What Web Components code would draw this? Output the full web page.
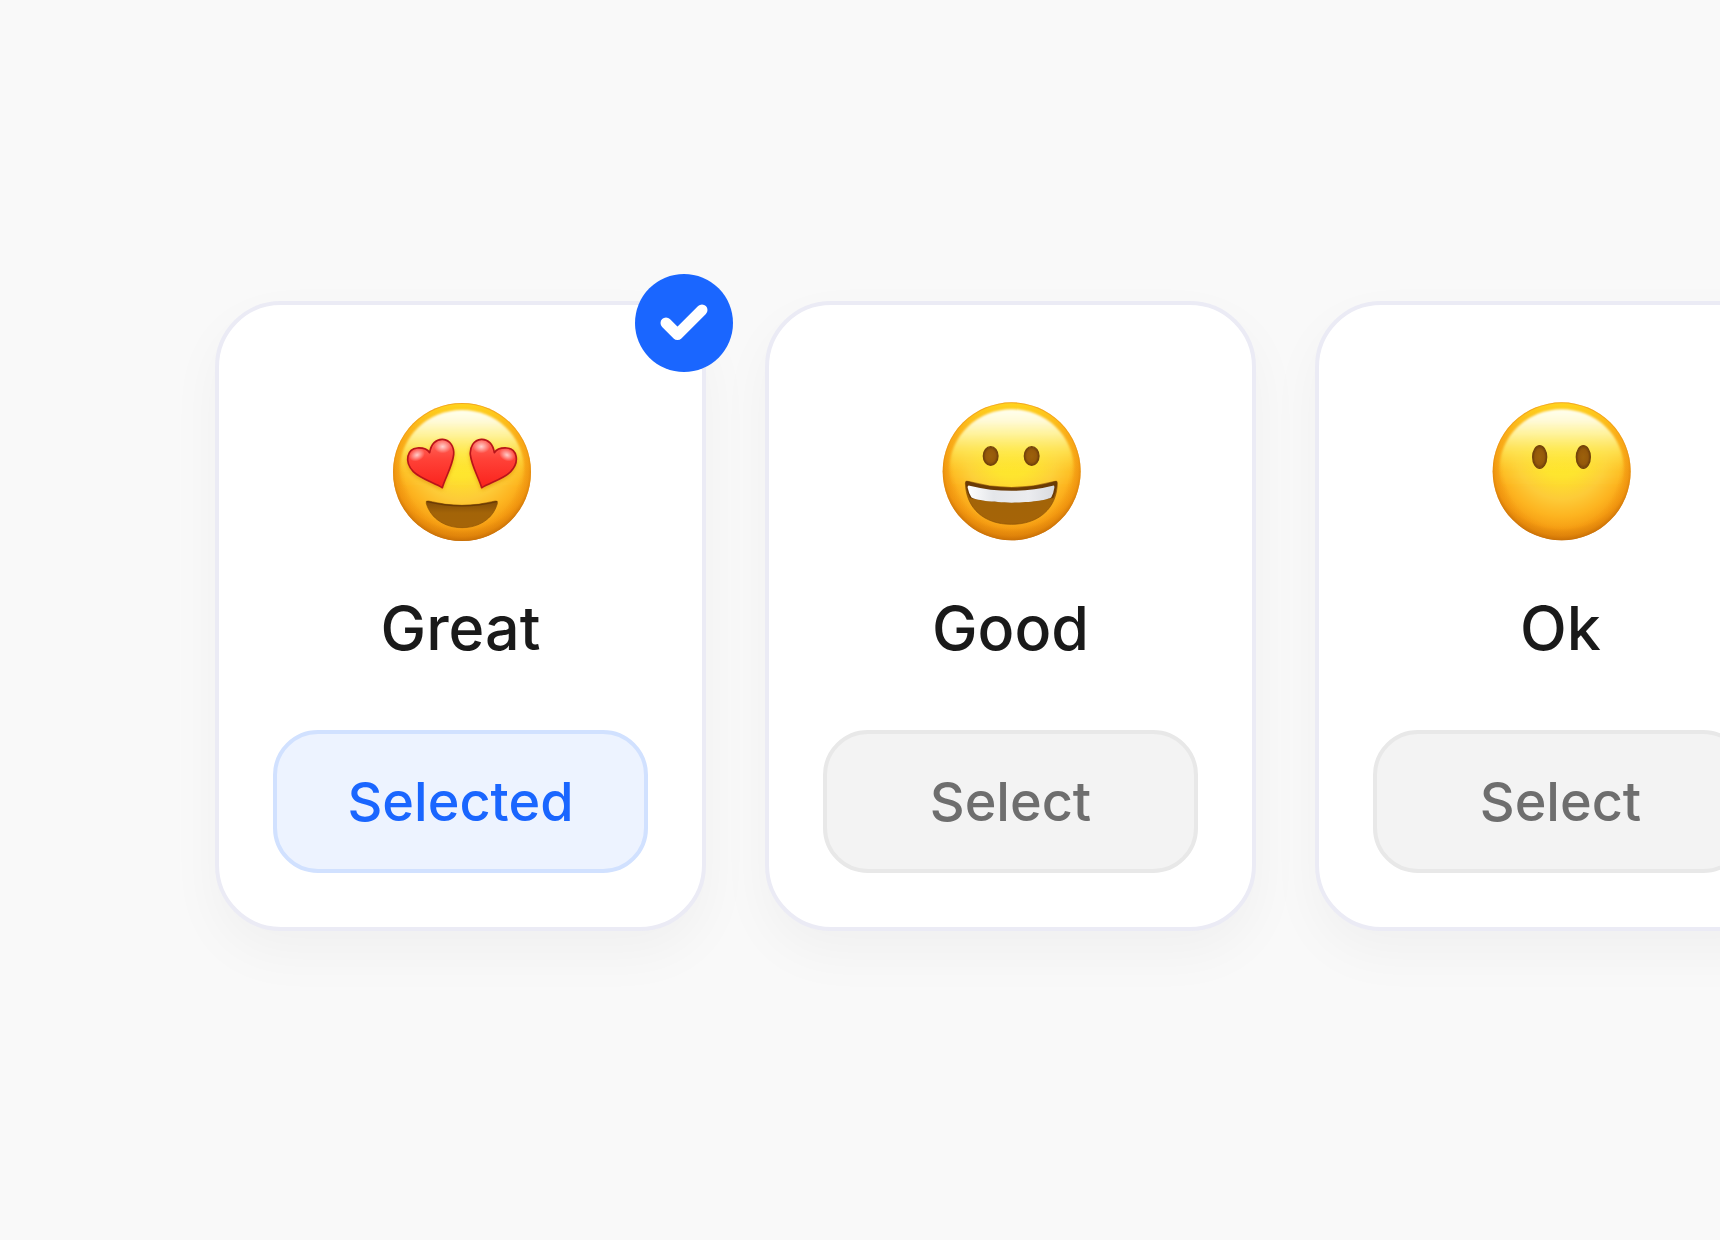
<!DOCTYPE html>
<html lang="en">
<head>
<meta charset="utf-8">
<meta name="viewport" content="width=device-width, initial-scale=1">
<title>Mood picker</title>
<style>
  body { margin: 0; background: #f9f9f9; font-family: Inter, "Liberation Sans", sans-serif; color: #1a1a1a; }
</style>
</head>
<body>

<mood-picker>
  <mood-card selected><mood-face slot="face" mood="great"></mood-face>Great</mood-card>
  <mood-card><mood-face slot="face" mood="good"></mood-face>Good</mood-card>
  <mood-card><mood-face slot="face" mood="ok"></mood-face>Ok</mood-card>
</mood-picker>

<script>
// <mood-face mood="great|good|ok"> — the glossy emoji, drawn around a shared head.
const HEART = 'M187 293C160 277 121 266 100 245C71 214 82 176 112 174C130 173 143 179 149 188C153 162 168 147 188 148C211 150 223 171 221 194C217 229 196 262 187 293Z';

const FACES = {
  great: {
    label: 'Smiling face with heart eyes', cx: 246, cy: 246,
    body: `
      <g filter="url(#soft)" fill="#e08a10" opacity=".8"><path d="${HEART}" transform="translate(0 6)"/><path d="${HEART}" transform="translate(492 6) scale(-1 1)"/></g>
      <g stroke="#b8141a" stroke-width="5" stroke-linejoin="round">
        <path d="${HEART}" fill="url(#heart)"/><path d="${HEART}" fill="url(#heart)" transform="translate(492 0) scale(-1 1)"/>
      </g>
      <g fill="url(#shine)">
        <ellipse cx="111" cy="195" rx="25" ry="18" transform="rotate(-25 111 195)"/><ellipse cx="188" cy="170" rx="26" ry="20"/>
        <ellipse cx="381" cy="195" rx="25" ry="18" transform="rotate(25 381 195)"/><ellipse cx="304" cy="170" rx="26" ry="20"/>
      </g>
      <path d="M145 333Q246 359 346 333Q354 331 352 341C339 387 296 413 246 413C196 413 153 387 139 341Q136 331 145 333Z" fill="url(#mouth)" stroke="#8a5004" stroke-width="2"/>
      <path d="M142 335Q246 360 350 335" fill="none" stroke="#6b3b05" stroke-width="4" stroke-linecap="round"/>`,
  },
  good: {
    label: 'Grinning face', cx: 245, cy: 244,
    body: `
      <g fill="url(#eye)" stroke="#74430a" stroke-width="4"><ellipse cx="182" cy="198" rx="22" ry="28"/><ellipse cx="305" cy="198" rx="22" ry="28"/></g>
      <path d="M114 274Q245 311 375 274Q382 271 382 279C381 355 326 403 244 403C162 403 108 355 106 279Q106 271 114 274Z" fill="url(#mouth)" stroke="#8a5004" stroke-width="2"/>
      <path d="M112 274Q245 313 377 274Q382 272 381 284Q378 308 370 324Q245 350 120 324Q109 304 107 282Q106 272 112 274Z" fill="#6b3b05"/>
      <path d="M119 287Q245 318 368 287Q374 285 373 293Q370 312 364 322C356 330 300 338 245 338C190 338 133 330 124 322Q116 308 113 293Q112 285 119 287Z" fill="url(#teeth)"/>`,
  },
  ok: {
    label: 'Face without mouth', cx: 245, cy: 244,
    body: `
      <g fill="url(#eye)" stroke="#74430a" stroke-width="4"><ellipse cx="179" cy="201" rx="21" ry="34"/><ellipse cx="310" cy="201" rx="21" ry="34"/></g>`,
  },
};

class MoodFace extends HTMLElement {
  connectedCallback() {
    if (this.shadowRoot) return;
    const face = FACES[this.getAttribute('mood')] || FACES.ok;
    this.attachShadow({ mode: 'open' }).innerHTML = `
      <style>
        :host { display: block; width: 161px; height: 161px; }
        svg { display: block; width: 100%; height: 100%; }
      </style>
      <svg viewBox="0 0 483 483" role="img" aria-label="${face.label}">
        <defs>
          <radialGradient id="skin" gradientUnits="userSpaceOnUse" cx="0" cy="-50" r="257">
            <stop offset="0" stop-color="#ffe727"/><stop offset=".26" stop-color="#fee22c"/>
            <stop offset=".52" stop-color="#fdcb38"/><stop offset=".72" stop-color="#fdb420"/>
            <stop offset=".86" stop-color="#f69f14"/><stop offset="1" stop-color="#c66c06"/>
          </radialGradient>
          <radialGradient id="edge" gradientUnits="userSpaceOnUse" cx="0" cy="-8" r="215">
            <stop offset=".8" stop-color="#ee8c08" stop-opacity="0"/><stop offset=".93" stop-color="#e98a0a" stop-opacity=".5"/>
            <stop offset="1" stop-color="#c87006" stop-opacity=".85"/>
          </radialGradient>
          <linearGradient id="rim" x2="0" y2="1">
            <stop offset="0" stop-color="#ffd41c"/><stop offset=".25" stop-color="#fcb016" stop-opacity=".6"/><stop offset=".5" stop-color="#fcae14" stop-opacity="0"/>
          </linearGradient>
          <linearGradient id="gloss" x2="0" y2="1">
            <stop offset="0" stop-color="#fffff0"/><stop offset=".1" stop-color="#fffde0" stop-opacity=".95"/>
            <stop offset=".22" stop-color="#fffbaa" stop-opacity=".85"/><stop offset=".36" stop-color="#fff768" stop-opacity=".6"/>
            <stop offset=".52" stop-color="#fff040" stop-opacity=".2"/><stop offset=".66" stop-color="#ffee40" stop-opacity="0"/>
          </linearGradient>
          <linearGradient id="heart" x2="0" y2="1"><stop offset="0" stop-color="#ff6a5e"/><stop offset=".4" stop-color="#ff4238"/><stop offset="1" stop-color="#fa221c"/></linearGradient>
          <radialGradient id="shine"><stop offset="0" stop-color="#fff" stop-opacity=".72"/><stop offset="1" stop-color="#fff" stop-opacity="0"/></radialGradient>
          <linearGradient id="mouth" x2="0" y2="1"><stop offset="0" stop-color="#804b07"/><stop offset=".45" stop-color="#a36408"/><stop offset="1" stop-color="#a56408"/></linearGradient>
          <radialGradient id="eye"><stop offset="0" stop-color="#9c610b"/><stop offset=".65" stop-color="#95590a"/><stop offset="1" stop-color="#74430a"/></radialGradient>
          <linearGradient id="teeth"><stop offset="0" stop-color="#fff"/><stop offset=".3" stop-color="#e4e6ea"/><stop offset=".7" stop-color="#ebecef"/><stop offset="1" stop-color="#d9dbe0"/></linearGradient>
          <filter id="soft" x="-20%" y="-20%" width="140%" height="140%"><feGaussianBlur stdDeviation="6"/></filter>
          <filter id="smooth"><feGaussianBlur stdDeviation="3"/></filter>
        </defs>
        <g transform="translate(${face.cx} ${face.cy})">
          <circle r="207" fill="url(#skin)"/>
          <circle r="207" fill="url(#edge)"/>
          <circle r="204" fill="url(#rim)"/>
          <ellipse cy="-8" rx="186" ry="178" fill="url(#gloss)" filter="url(#smooth)"/>
        </g>
        ${face.body}
      </svg>`;
  }
}
customElements.define('mood-face', MoodFace);

// <check-badge> — round tick that sits over a selected card's corner.
class CheckBadge extends HTMLElement {
  connectedCallback() {
    if (this.shadowRoot) return;
    this.attachShadow({ mode: 'open' }).innerHTML = `
      <style>
        :host { display: block; width: 98px; height: 98px; border-radius: 50%; background: #1a66ff; }
        svg { display: block; width: 100%; height: 100%; }
      </style>
      <svg viewBox="0 0 98 98" fill="none" stroke="#fff" stroke-width="11" stroke-linecap="round" stroke-linejoin="round" aria-hidden="true">
        <path d="M31 49L42.500 60.500L67 36"/>
      </svg>`;
  }
}
customElements.define('check-badge', CheckBadge);

// <mood-card selected> — default slot is the mood's name, slot="face" its emoji.
class MoodCard extends HTMLElement {
  static get observedAttributes() { return ['selected']; }

  connectedCallback() {
    if (!this.shadowRoot) {
      this.attachShadow({ mode: 'open' }).innerHTML = `
        <style>
          :host {
            position: relative; box-sizing: border-box; flex: none; width: 491px;
            display: flex; flex-direction: column; align-items: center;
            padding: 85px 54px 54px; border: 4px solid #ebebf5; border-radius: 66px;
            background: #fff; box-shadow: 0 22px 54px rgba(0, 0, 0, .04);
          }
          h2 { margin: 40px 0 65px; font-size: 61px; line-height: 74px; font-weight: 500; }
          button {
            box-sizing: border-box; width: 100%; height: 143px; padding: 0;
            border: 4px solid #e8e8e8; border-radius: 45px; background: #f3f3f3;
            color: #6e6e6e; font: 500 54px/64px Inter, "Liberation Sans", sans-serif; cursor: pointer;
          }
          check-badge { display: none; position: absolute; top: -31px; right: -31px; }
          :host([selected]) button { border-color: #d1e1ff; background: #edf3ff; color: #1a66ff; }
          :host([selected]) check-badge { display: block; }
        </style>
        <slot name="face"></slot>
        <h2 id="name"><slot></slot></h2>
        <button type="button" id="pick" aria-describedby="name"></button>
        <check-badge></check-badge>`;
      this._button = this.shadowRoot.querySelector('button');
      this._button.addEventListener('click', () => this.dispatchEvent(new CustomEvent('mood-pick', { bubbles: true })));
    }
    this._sync();
  }
  attributeChangedCallback() { if (this._button) this._sync(); }

  _sync() {
    const on = this.hasAttribute('selected');
    this._button.textContent = on ? 'Selected' : 'Select';
    this._button.setAttribute('aria-pressed', on);
  }
}
customElements.define('mood-card', MoodCard);

// <mood-picker> — sideways-scrolling row, one card selected at a time.
class MoodPicker extends HTMLElement {
  connectedCallback() {
    if (this.shadowRoot) return;
    this.attachShadow({ mode: 'open' }).innerHTML = `
      <style>
        :host {
          display: flex; align-items: flex-start; gap: 59px; box-sizing: border-box; min-height: 100vh;
          padding: 301px 215px 120px; overflow-x: auto; scrollbar-width: none;
        }
      </style>
      <slot></slot>`;
    this.addEventListener('mood-pick', e => {
      for (const card of this.querySelectorAll('mood-card')) card.toggleAttribute('selected', card === e.target);
    });
  }
}
customElements.define('mood-picker', MoodPicker);
</script>
</body>
</html>
